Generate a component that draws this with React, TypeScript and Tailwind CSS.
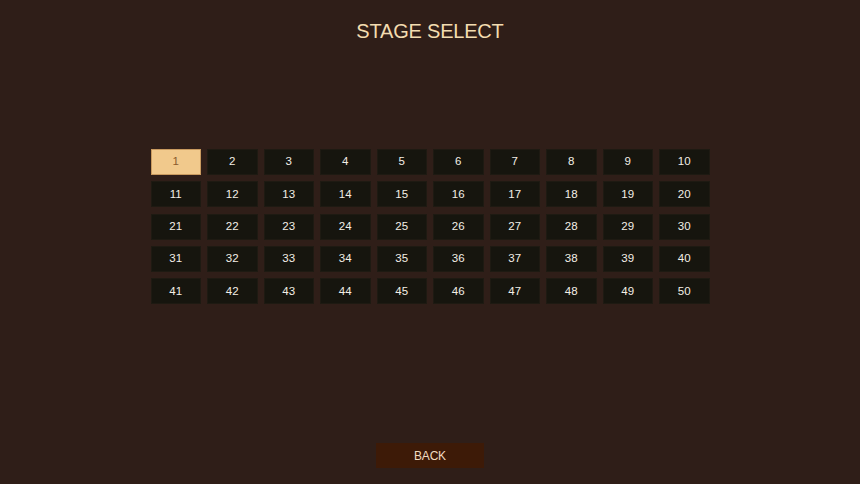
const stages = Array.from({ length: 50 }, (_, i) => i + 1);

export default function App() {
  const selected = 1;

  return (
    <div className="flex h-[484px] w-[860px] flex-col items-center bg-[#2f1e18] font-['Liberation_Sans',Arial,sans-serif]">
      <h1 className="mt-[18px] text-[20px] leading-[26px] tracking-[-0.2px] text-[#f3dcb0]">STAGE SELECT</h1>

      <div className="mt-[105px] grid w-[559px] grid-cols-10 gap-x-[6px] gap-y-[6.3px]">
        {stages.map((n) =>
          n === selected ? (
            <button
              key={n}
              className="flex h-[26px] items-center justify-center border border-[#c99a5f] bg-[#f1c98c] text-[11.5px] text-[#8a5a2c]"
            >
              {n}
            </button>
          ) : (
            <button
              key={n}
              className="flex h-[26px] items-center justify-center border border-[#1e1a12] bg-[#16150e] text-[11.5px] text-[#f3efe6]"
            >
              {n}
            </button>
          )
        )}
      </div>

      <button className="mb-[16px] mt-auto h-[25px] w-[108px] bg-[#3d1a07] text-[12px] tracking-[-0.2px] text-[#f1dcc0]">BACK</button>
    </div>
  );
}
